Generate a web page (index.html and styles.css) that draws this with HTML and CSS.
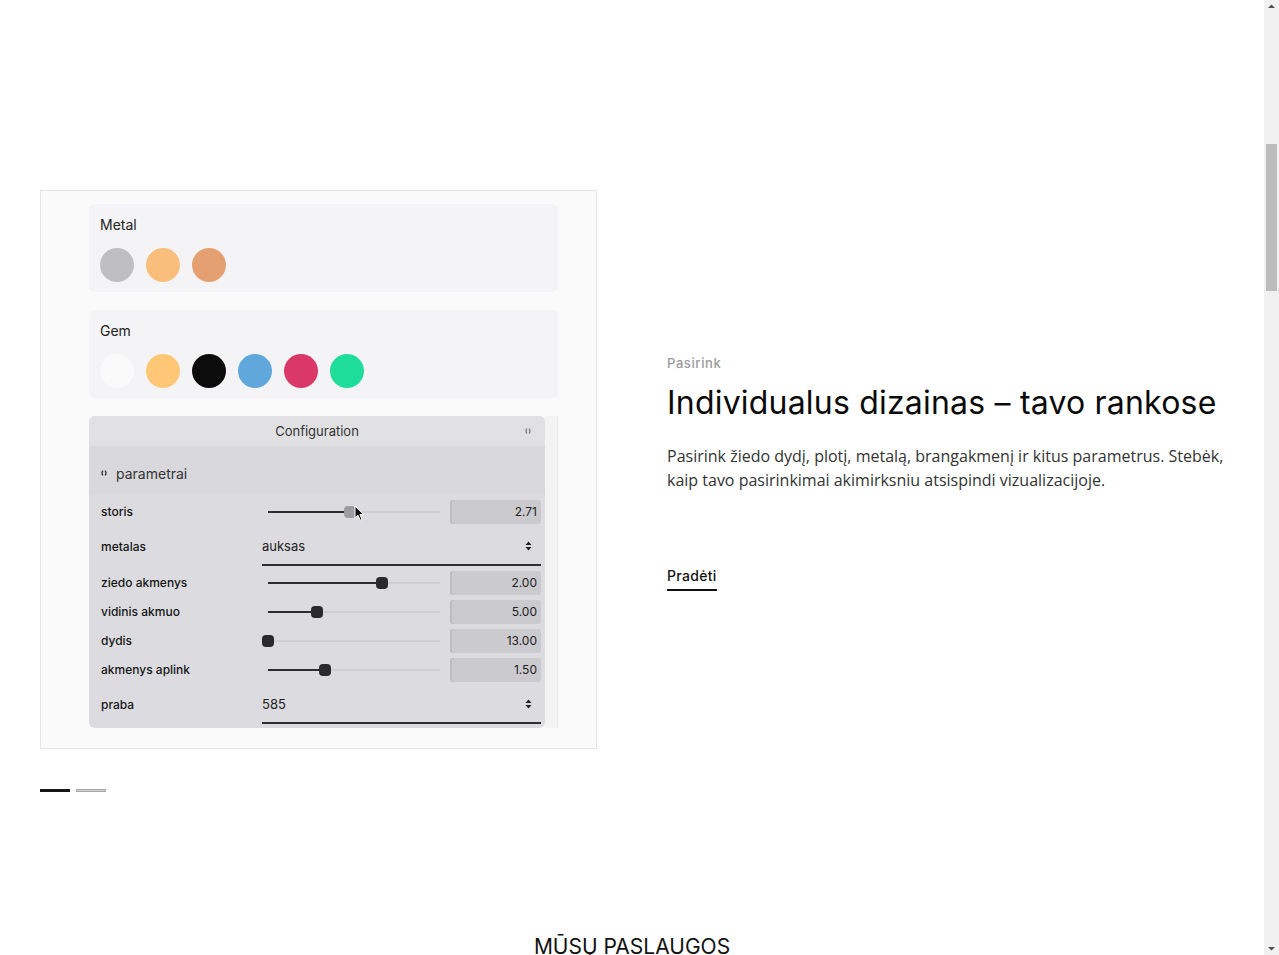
FILE: index.html
```html
<!DOCTYPE html>
<html lang="lt">
<head>
<meta charset="utf-8">
<title>Individualus dizainas</title>
<link rel="stylesheet" href="styles.css">
</head>
<body>
<main class="page">
  <section class="feature">
    <div class="feature-grid">
      <div class="media">
        <div class="demo">
          <div class="swatch-panel">
            <div class="swatch-title">Metal</div>
            <div class="swatches">
              <span class="dot" style="background:#bfbfc1"></span>
              <span class="dot" style="background:#f9be7b"></span>
              <span class="dot" style="background:#e5a072"></span>
            </div>
          </div>
          <div class="swatch-panel">
            <div class="swatch-title">Gem</div>
            <div class="swatches">
              <span class="dot" style="background:#fafafa"></span>
              <span class="dot" style="background:#fdc776"></span>
              <span class="dot" style="background:#0c0c0c"></span>
              <span class="dot" style="background:#60a8dc"></span>
              <span class="dot" style="background:#da3868"></span>
              <span class="dot" style="background:#1edc9a"></span>
            </div>
          </div>
          <div class="gui-wrap">
            <div class="gui">
              <div class="gui-header">
                <span>Configuration</span>
                <svg class="gui-toggle" width="6" height="6" viewBox="0 0 6 6"><path d="M1.9 0.6 Q0.2 3 1.9 5.4 M4.1 0.6 Q5.8 3 4.1 5.4" stroke="#7a7a7e" stroke-width="1.3" fill="none"/></svg>
              </div>
              <div class="gui-folder">
                <svg class="folder-icon" width="6" height="6" viewBox="0 0 6 6"><path d="M1.9 0.6 Q0.2 3 1.9 5.4 M4.1 0.6 Q5.8 3 4.1 5.4" stroke="#3a3a3e" stroke-width="1.4" fill="none"/></svg>
                <span>parametrai</span>
              </div>
              <div class="gui-rows">
                <div class="row">
                  <span class="label">storis</span>
                  <div class="slider"><div class="track"><div class="fill" style="width:47.7%"></div><span class="knob hover" style="left:47.7%"></span></div></div>
                  <div class="value">2.71</div>
                  <svg class="cursor" width="11" height="17" viewBox="0 0 11 17"><path d="M1 1 L1 13 L4 10.3 L6.2 15.2 L8 14.4 L5.9 9.6 L9.8 9.6 Z" fill="#111" stroke="#fff" stroke-width="1"/></svg>
                </div>
                <div class="row select-row">
                  <span class="label">metalas</span>
                  <div class="select"><span>auksas</span>
                    <svg width="7" height="10" viewBox="0 0 7 10"><path d="M3.5 0.5 L6.5 4 L0.5 4 Z M3.5 9.5 L6.5 6 L0.5 6 Z" fill="#222"/></svg>
                  </div>
                </div>
                <div class="row">
                  <span class="label">ziedo akmenys</span>
                  <div class="slider"><div class="track"><div class="fill" style="width:66.3%"></div><span class="knob" style="left:66.3%"></span></div></div>
                  <div class="value">2.00</div>
                </div>
                <div class="row">
                  <span class="label">vidinis akmuo</span>
                  <div class="slider"><div class="track"><div class="fill" style="width:28.5%"></div><span class="knob" style="left:28.5%"></span></div></div>
                  <div class="value">5.00</div>
                </div>
                <div class="row">
                  <span class="label">dydis</span>
                  <div class="slider"><div class="track"><div class="fill" style="width:0%"></div><span class="knob" style="left:0%"></span></div></div>
                  <div class="value">13.00</div>
                </div>
                <div class="row">
                  <span class="label">akmenys aplink</span>
                  <div class="slider"><div class="track"><div class="fill" style="width:33.1%"></div><span class="knob" style="left:33.1%"></span></div></div>
                  <div class="value">1.50</div>
                </div>
                <div class="row select-row">
                  <span class="label">praba</span>
                  <div class="select"><span>585</span>
                    <svg width="7" height="10" viewBox="0 0 7 10"><path d="M3.5 0.5 L6.5 4 L0.5 4 Z M3.5 9.5 L6.5 6 L0.5 6 Z" fill="#222"/></svg>
                  </div>
                </div>
              </div>
            </div>
            <div class="gui-scroll"></div>
          </div>
        </div>
      </div>
      <div class="copy">
        <div class="eyebrow">Pasirink</div>
        <h2 class="title">Individualus dizainas – tavo rankose</h2>
        <p class="lead">Pasirink žiedo dydį, plotį, metalą, brangakmenį ir kitus parametrus. Stebėk, kaip tavo pasirinkimai akimirksniu atsispindi vizualizacijoje.</p>
        <a class="cta" href="#">Pradėti</a>
      </div>
    </div>
    <div class="pager">
      <span class="bar active"></span>
      <span class="bar"></span>
    </div>
  </section>
  <section class="services">
    <h2 class="services-title">MŪSŲ PASLAUGOS</h2>
  </section>
</main>
<aside class="scrollbar" aria-hidden="true">
  <svg class="sb-arrow" width="15" height="15" viewBox="0 0 15 15"><path d="M7.5 4.5 L11 8 L4 8 Z" fill="#505050"/></svg>
  <div class="sb-track"><div class="sb-thumb"></div></div>
  <svg class="sb-arrow" width="15" height="15" viewBox="0 0 15 15"><path d="M7.5 10.5 L11 7 L4 7 Z" fill="#505050"/></svg>
</aside>
</body>
</html>
```
FILE: styles.css
```css
* { box-sizing: border-box; }
html, body { margin: 0; padding: 0; height: 100%; overflow: hidden; }
body {
  display: flex;
  background: #fff;
  color: #111;
  font-family: "Open Sans", "Noto Sans", sans-serif;
}

.page {
  flex: 1;
  min-width: 0;
  height: 100vh;
  overflow: hidden;
}

.scrollbar {
  width: 15px;
  height: 100vh;
  background: #f1f1f1;
  display: flex;
  flex-direction: column;
}
.sb-arrow { display: block; flex: none; }
.sb-track { flex: 1; padding: 129px 2px 0; }
.sb-thumb { height: 147px; background: #bcbcbc; }

.feature { padding: 190px 40px 0; }
.feature-grid {
  display: grid;
  grid-template-columns: 557px 1fr;
  column-gap: 70px;
  align-items: center;
}

.media {
  height: 559px;
  border: 1px solid #e6e6e6;
  background: #fafafa;
  padding: 13px 0 0 48px;
}
.demo {
  width: 469px;
  display: flex;
  flex-direction: column;
  gap: 18px;
  font-family: Inter, "Noto Sans", sans-serif;
}
.swatch-panel {
  height: 88px;
  background: #f4f3f5;
  border-radius: 6px;
  padding: 12px 11px 0;
}
.swatch-title { font-size: 14px; line-height: 17px; color: #222; }
.swatches { display: flex; gap: 12px; margin-top: 15px; }
.dot { width: 34px; height: 34px; border-radius: 50%; display: block; }

.gui-wrap { display: flex; height: 312px; }
.gui {
  width: 456px;
  background: #dcdce0;
  border-radius: 6px;
  overflow: hidden;
}
.gui-scroll {
  width: 13px;
  background: #f3f3f4;
  border-right: 1px solid #ececec;
}
.gui-header {
  height: 30px;
  background: #e1e1e4;
  display: flex;
  align-items: center;
  justify-content: center;
  position: relative;
  font-size: 13px;
  color: #333;
}
.gui-toggle { position: absolute; right: 14px; top: 12px; }
.gui-folder {
  height: 48px;
  background: #d9d9dd;
  display: flex;
  align-items: center;
  padding: 6px 0 0 12px;
  gap: 9px;
  font-size: 14px;
  color: #333;
}
.gui-rows { padding: 3px 4px 0 12px; }
.row {
  height: 29px;
  display: grid;
  grid-template-columns: 161px 1fr 91px;
  align-items: center;
  position: relative;
}
.label { font-size: 12px; color: #151515; font-weight: 450; }
.slider { padding: 0 10px 0 6px; }
.track { height: 2px; background: #cfcfd3; position: relative; }
.fill { height: 2px; background: #2c2c30; }
.knob {
  position: absolute;
  top: -5px;
  width: 12px;
  height: 12px;
  margin-left: -6px;
  border-radius: 4px;
  background: #2a2a2e;
}
.knob.hover { background: #9b9da1; }
.value {
  height: 24px;
  background: #cbcbcf;
  border-radius: 3px;
  box-shadow: inset 2px 0 0 #bdbdc1;
  text-align: right;
  padding-right: 4px;
  font-size: 12px;
  line-height: 24px;
  color: #222;
}
.cursor { position: absolute; left: 253px; top: 8px; }
.select-row { height: 42px; grid-template-columns: 161px 1fr; align-items: start; }
.select {
  height: 40px;
  border-bottom: 2px solid #2e2e30;
  display: flex;
  align-items: center;
  justify-content: space-between;
  padding: 2px 9px 0 0;
  font-size: 13px;
  color: #222;
}
.select-row .label { line-height: 41px; }

.copy { padding-top: 6px; }
.eyebrow {
  font-family: Inter, "Noto Sans", sans-serif;
  font-size: 13px;
  line-height: 16px;
  color: #9a9a9a;
  font-weight: 500;
  letter-spacing: 0.6px;
}
.title {
  font-family: Inter, "Noto Sans", sans-serif;
  font-weight: 400;
  font-size: 32px;
  line-height: 40px;
  margin: 12px 0 0;
  color: #0a0a0a;
  letter-spacing: 0.2px;
}
.lead {
  margin: 21px 0 0;
  font-size: 16px;
  line-height: 24px;
  color: #333;
}
.cta {
  display: inline-block;
  margin-top: 74px;
  font-family: Inter, "Noto Sans", sans-serif;
  font-size: 14px;
  line-height: 20px;
  font-weight: 500;
  color: #111;
  text-decoration: none;
  letter-spacing: 0.3px;
  padding-bottom: 3px;
  border-bottom: 2px solid #111;
}

.pager { display: flex; gap: 6px; margin-top: 40px; }
.bar { width: 30px; height: 3px; background: #161616; display: block; }
.bar:not(.active) { background: #cfcfcf; border: 1px solid #aaa; }

.services {
  padding: 141px 40px 0;
  text-align: center;
}
.services-title {
  margin: 0;
  font-family: Inter, "Noto Sans", sans-serif;
  font-weight: 400;
  font-size: 21px;
  line-height: 28px;
  color: #111;
}
```
